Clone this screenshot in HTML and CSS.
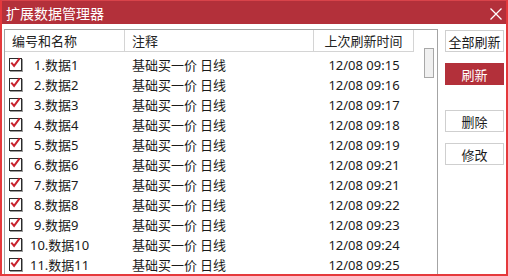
FILE: index.html
```html
<html>
<head>
    <meta charset="UTF-8">
    <title>扩展数据管理器</title>
    <link rel="stylesheet" href="styles.css">
</head>
<body>
    <div class="window">
        <div class="titlebar">
            <span class="title">扩展数据管理器</span>
            <svg class="close" width="12" height="12" viewBox="0 0 12 12">
                <path d="M0.5 0.5 L11.5 11.5 M11.5 0.5 L0.5 11.5" stroke="#fff" stroke-width="1.3" fill="none"/>
            </svg>
        </div>
        <div class="content">
            <div class="list">
                <div class="grid">
                    <div class="head">
                        <div class="hcell name-col">编号和名称</div>
                        <div class="hcell note-col">注释</div>
                        <div class="hcell time-col">上次刷新时间</div>
                        <div class="hfill"></div>
                    </div>
                    <div class="rows" id="rows"></div>
                </div>
                <div class="vscroll"><div class="thumb"></div></div>
            </div>
            <div class="side">
                <button class="btn first">全部刷新</button>
                <button class="btn red">刷新</button>
                <button class="btn gap">删除</button>
                <button class="btn">修改</button>
            </div>
        </div>
    </div>
    <script type="text/javascript">
        const times = ['09:15','09:16','09:17','09:18','09:19','09:21','09:21','09:22','09:23','09:24','09:25'];
        let rows = document.getElementById('rows');
        const check = '<svg width="13" height="13" viewBox="0 0 13 13"><path d="M2.5 5.5 L5.5 9 L11.5 1" stroke="#c8222e" stroke-width="2.2" fill="none"/></svg>';
        for(let i in times){
            let n = parseInt(i)+1;
            const row = document.createElement('div');
            row.className = 'row';
            row.innerHTML = '<div class="cell name-col"><span class="box">'+check+'</span><span class="label'+(n>9?' wide':'')+'">'+n+'.数据'+n+'</span></div>'
                + '<div class="cell note-col">基础买一价 日线</div>'
                + '<div class="cell time-col">12/08 '+times[i]+'</div>';
            rows.appendChild(row);
        }
    </script>
</body>
</html>
```

FILE: styles.css
```css
body {
    margin: 0;
    font-family: "Noto Sans", "Noto Sans CJK SC", sans-serif;
    font-size: 13px;
    color: #1a1a1a;
}
.window {
    width: 508px;
    height: 276px;
    box-sizing: border-box;
    border: 2px solid #e5393c;
    border-top: 1px solid #d8434a;
    display: flex;
    flex-direction: column;
    overflow: hidden;
    background: white;
}
.titlebar {
    height: 23px;
    flex-shrink: 0;
    background: #b3303a;
    color: white;
    display: flex;
    align-items: center;
    justify-content: space-between;
    padding: 0 4px 0 4px;
}
.title {
    font-family: "Noto Sans CJK SC", sans-serif;
    font-size: 14px;
    line-height: 22px;
}
.close {
    margin-top: 2px;
}
.content {
    flex: 1;
    display: flex;
    padding: 5px 0 0 2px;
    min-height: 0;
}
.list {
    width: 434px;
    box-sizing: border-box;
    border: 1px solid #a4a4a4;
    border-bottom: none;
    display: flex;
    flex-shrink: 0;
}
.grid {
    flex: 1;
}
.head {
    display: flex;
    height: 22px;
}
.hcell {
    box-sizing: border-box;
    height: 22px;
    line-height: 21px;
    border-right: 1px solid #d4d4d4;
    border-bottom: 1px solid #d4d4d4;
    font-family: "Noto Sans CJK SC", sans-serif;
    color: #222;
}
.hfill {
    width: 6px;
    height: 22px;
    box-sizing: border-box;
    border-bottom: 1px solid #e4e4e4;
    margin-left: 1px;
    border-bottom-width: 0;
}
.name-col {
    width: 120px;
    padding-left: 7px;
    box-sizing: border-box;
}
.note-col {
    width: 189px;
    padding-left: 7px;
    box-sizing: border-box;
}
.time-col {
    width: 100px;
    text-align: center;
    box-sizing: border-box;
}
.hcell.time-col {
    padding-left: 0;
}
.rows {
    padding-top: 3px;
}
.row {
    display: flex;
    height: 20px;
    align-items: center;
}
.cell {
    line-height: 20px;
    white-space: nowrap;
}
.cell.name-col {
    display: flex;
    align-items: center;
    padding-left: 4px;
}
.cell.note-col {
    font-family: "Noto Sans CJK SC", sans-serif;
}
.box {
    width: 13px;
    height: 13px;
    box-sizing: border-box;
    border: 1px solid #2a2a2a;
    box-shadow: 1px 1px 0 #9a9a9a;
    display: flex;
    margin-top: -1px;
}
.box svg {
    margin: -2px 0 0 -1px;
}
.label {
    margin-left: 12px;
}
.label.wide {
    margin-left: 8px;
}
.vscroll {
    width: 18px;
    border-left: 0;
}
.thumb {
    width: 10px;
    height: 30px;
    box-sizing: border-box;
    margin: 18px 0 0 3px;
    border: 1px solid #a8a8a8;
    background: #f0f0f0;
}
.side {
    display: flex;
    flex-direction: column;
    margin-left: 7px;
    width: 59px;
}
.btn {
    height: 22px;
    width: 59px;
    padding: 0;
    background: white;
    border: 1px solid #cfcfcf;
    font-family: "Noto Sans CJK SC", sans-serif;
    font-size: 13px;
    color: #1a1a1a;
    margin-top: 11px;
}
.btn.first {
    margin-top: 1px;
}
.btn.red {
    background: #b3303a;
    border-color: #b3303a;
    color: white;
}
.btn.gap {
    margin-top: 25px;
}
```
